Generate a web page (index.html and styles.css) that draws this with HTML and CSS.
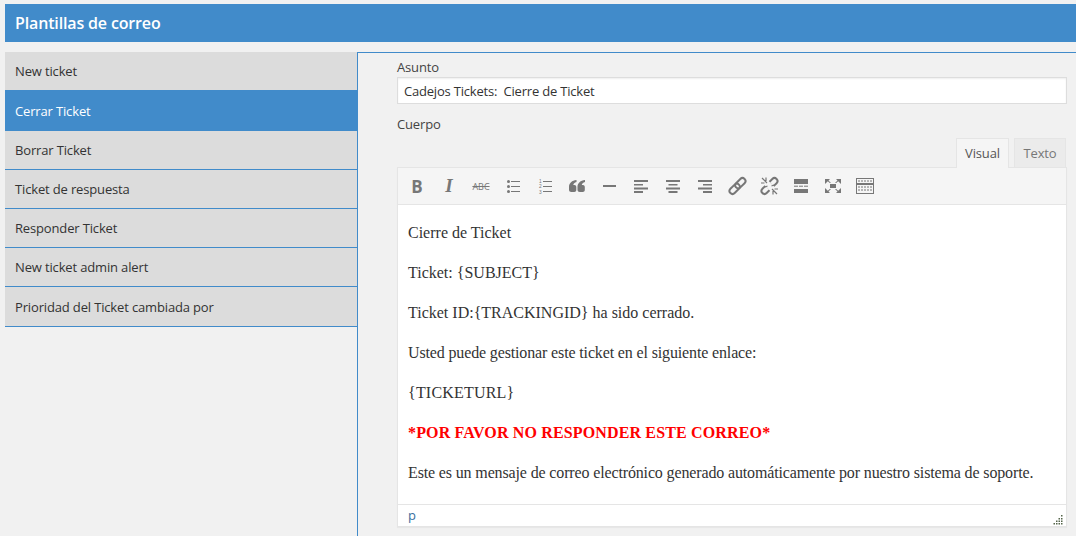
FILE: index.html
```html
<!DOCTYPE html>
<html lang="es">
<head>
  <meta charset="UTF-8">
  <title>Plantillas de correo</title>
  <link rel="stylesheet" href="styles.css">
</head>
<body>

<h1 class="title">Plantillas de correo</h1>

<div class="main">
  <ul class="menu">
    <li class="menu-first">New ticket</li>
    <li class="active">Cerrar Ticket</li>
    <li>Borrar Ticket</li>
    <li>Ticket de respuesta</li>
    <li>Responder Ticket</li>
    <li>New ticket admin alert</li>
    <li class="menu-last">Prioridad del Ticket cambiada por</li>
  </ul>

  <div class="panel">
    <label class="field-label">Asunto</label>
    <input class="subject" type="text" value="Cadejos Tickets:  Cierre de Ticket">
    <label class="field-label body-label">Cuerpo</label>

    <div class="tabs">
      <span class="tab tab-on">Visual</span>
      <span class="tab">Texto</span>
    </div>

    <div class="editor">
      <div class="toolbar">
        <span class="btn txt-b">B</span>
        <span class="btn txt-i">I</span>
        <span class="btn txt-abc">ABC</span>
        <span class="btn"><svg width="20" height="20" viewBox="0 0 20 20"><g fill="#777"><circle cx="5.500" cy="5.500" r="1.500"/><circle cx="5.500" cy="10.500" r="1.500"/><circle cx="5.500" cy="15.500" r="1.500"/><rect x="8" y="5" width="9" height="1"/><rect x="8" y="10" width="9" height="1"/><rect x="8" y="15" width="9" height="1"/></g></svg></span>
        <span class="btn"><svg width="20" height="20" viewBox="0 0 20 20"><g fill="#777"><rect x="8" y="5" width="9" height="1"/><rect x="8" y="10" width="9" height="1"/><rect x="8" y="15" width="9" height="1"/></g><g fill="#777" font-size="4.800" font-family="Liberation Sans"><text x="4" y="6.500">1</text><text x="4" y="12">2</text><text x="4" y="17.500">3</text></g></svg></span>
        <span class="btn"><svg width="20" height="20" viewBox="0 0 20 20"><path fill="#777" d="M9.500 4v2C7.500 6.500 6.500 7.600 6.300 9h1.200c1 0 1.800.8 1.800 2v3c0 1.200-.9 2-2 2H4.300C3 16 2 15 2 13.700v-2.900C2 7.200 5 4.300 9.500 4zM18 4v2c-2 .5-3 1.600-3.200 3H16c1 0 1.800.8 1.800 2v3c0 1.200-.9 2-2 2h-3c-1.300 0-2.300-1-2.300-2.300v-2.900C10.500 7.200 13.500 4.300 18 4z"/></svg></span>
        <span class="btn"><svg width="20" height="20" viewBox="0 0 20 20"><rect x="4" y="9" width="13" height="2" fill="#777"/></svg></span>
        <span class="btn"><svg width="20" height="20" viewBox="0 0 20 20"><g fill="#777"><rect x="3" y="4" width="14" height="2"/><rect x="3" y="8" width="9" height="1.500"/><rect x="3" y="11.500" width="14" height="2"/><rect x="3" y="15" width="9" height="2"/></g></svg></span>
        <span class="btn"><svg width="20" height="20" viewBox="0 0 20 20"><g fill="#777"><rect x="3" y="4" width="14" height="2"/><rect x="5.500" y="8" width="9" height="1.500"/><rect x="3" y="11.500" width="14" height="2"/><rect x="5.500" y="15" width="9" height="2"/></g></svg></span>
        <span class="btn"><svg width="20" height="20" viewBox="0 0 20 20"><g fill="#777"><rect x="3" y="4" width="14" height="2"/><rect x="8" y="8" width="9" height="1.500"/><rect x="3" y="11.500" width="14" height="2"/><rect x="8" y="15" width="9" height="2"/></g></svg></span>
        <span class="btn"><svg width="20" height="20" viewBox="0 0 20 20"><g fill="none" stroke="#777" stroke-width="2" transform="rotate(-45 10.500 10)"><rect x="0.500" y="7" width="12" height="6" rx="3"/><rect x="8.500" y="7" width="12" height="6" rx="3"/></g></svg></span>
        <span class="btn"><svg width="20" height="20" viewBox="0 0 20 20"><g fill="none" stroke="#777" stroke-width="2" transform="rotate(-45 10.500 10)"><rect x="0.500" y="7" width="12" height="6" rx="3"/><rect x="8.500" y="7" width="12" height="6" rx="3"/></g><path d="M5 4.500 16 15.500" stroke="#f5f5f5" stroke-width="6"/><g stroke="#777" stroke-width="1.200"><path d="M3 2l5 5M7 1.500V5M2 7h3.500M18 18l-5-5M14 18.500V15M19 13h-3.500M8.500 10l-2.500 1M12.500 10l2.500-1"/></g></svg></span>
        <span class="btn"><svg width="20" height="20" viewBox="0 0 20 20"><g fill="#777"><rect x="3" y="3" width="14" height="5"/><rect x="3" y="9.700" width="4" height="1"/><rect x="8" y="9.700" width="4" height="1"/><rect x="13" y="9.700" width="4" height="1"/><rect x="3" y="13" width="14" height="4"/></g></svg></span>
        <span class="btn"><svg width="20" height="20" viewBox="0 0 20 20"><g fill="#777"><rect x="7" y="8" width="6" height="4"/><path d="M2 3h5L5.500 4.500 8 7H6.800L4.800 5.200 2 8zM18 3v5l-2.800-2.800-2 1.800H12l2.500-2.500L13 3zM2 17v-5l2.800 2.800 2-1.800H8l-2.500 2.500L7 17zM18 17h-5l1.500-1.500L12 13h1.200l2 1.800L18 12z"/></g></svg></span>
        <span class="btn"><svg width="20" height="20" viewBox="0 0 20 20"><g fill="none" stroke="#777"><rect x="1.500" y="2.500" width="17" height="5"/><rect x="1.500" y="8.500" width="17" height="9"/></g><g stroke="#777" stroke-dasharray="2 1"><path d="M3 5h14M3 11h14M3 14h14"/></g></svg></span>
      </div>

      <div class="content">
        <p>Cierre de Ticket</p>
        <p>Ticket: {SUBJECT}</p>
        <p>Ticket ID:{TRACKINGID} ha sido cerrado.</p>
        <p class="tight">Usted puede gestionar este ticket en el siguiente enlace:</p>
        <p class="wide">{TICKETURL}</p>
        <p class="warn">*POR FAVOR NO RESPONDER ESTE CORREO*</p>
        <p class="tight">Este es un mensaje de correo electrónico generado automáticamente por nuestro sistema de soporte.</p>
      </div>

      <div class="status">
        <span class="path">p</span>
        <svg class="grip" width="10" height="10" viewBox="0 0 10 10"><path fill="#55654a" d="M8 0h1.500v1.500H8zM5.500 3H7v1.500H5.500zM8 3h1.500v1.500H8zM3 5.500h1.500V7H3zM5.500 5.500H7V7H5.500zM8 5.500h1.500V7H8zM.5 8H2v1.500H.5zM3 8h1.500v1.500H3zM5.500 8H7v1.500H5.500zM8 8h1.500v1.500H8z"/></svg>
      </div>
    </div>
  </div>
</div>

</body>
</html>
```

FILE: styles.css
```css
html, body {
  height: 100%;
}
body {
  margin: 0;
  padding-top: 4px;
  box-sizing: border-box;
  overflow: hidden;
  background-color: #f1f1f1;
  color: #333;
  font-family: 'Open Sans', sans-serif;
  font-size: 13px;
  letter-spacing: -0.15px;
}

.title {
  margin: 0 0 10px 5px;
  padding: 0 10px;
  height: 38px;
  line-height: 38px;
  background-color: #418bca;
  color: #fff;
  font-size: 16px;
  font-weight: 600;
}

.main {
  display: flex;
  margin-left: 5px;
}

.menu {
  width: 352px;
  margin: 0;
  padding: 0;
  list-style: none;
}
.menu li {
  height: 38px;
  line-height: 38px;
  padding: 0 10px;
  background-color: #dcdcdc;
  border-bottom: 1px solid #418bca;
}
.menu .menu-first {
  border-bottom: none;
}
.menu .active {
  height: 41px;
  line-height: 43px;
  background-color: #418bca;
  color: #fff;
  border-bottom: none;
}
.menu .menu-last {
  height: 39px;
  line-height: 40px;
}

.panel {
  flex: 1;
  height: 484px;
  padding: 5px 9px 0 39px;
  background-color: #f1f1f1;
  border-left: 1px solid #418bca;
  border-top: 1px solid #418bca;
}

.field-label {
  display: block;
  height: 19px;
  line-height: 18px;
  color: #444;
}
.body-label {
  margin-top: 10px;
  height: 20px;
  line-height: 20px;
}

.subject {
  display: block;
  box-sizing: border-box;
  width: 670px;
  height: 27px;
  margin: 0;
  padding: 0 6px;
  border: 1px solid #ddd;
  box-shadow: inset 0 1px 2px rgba(0, 0, 0, 0.07);
  background-color: #fff;
  color: #333;
  font-family: 'Open Sans', sans-serif;
  font-size: 13px;
  letter-spacing: -0.2px;
}

.tabs {
  display: flex;
  justify-content: flex-end;
  gap: 5px;
  width: 669px;
  margin-top: 4px;
  height: 29px;
}
.tab {
  box-sizing: border-box;
  height: 29px;
  width: 52px;
  line-height: 28px;
  text-align: center;
  background-color: #ebebeb;
  border: 1px solid #e5e5e5;
  border-bottom: none;
  color: #777;
}
.tab-on {
  width: 53px;
  height: 30px;
  background-color: #f5f5f5;
  color: #555;
  position: relative;
}

.editor {
  box-sizing: border-box;
  width: 670px;
  background-color: #fff;
  border: 1px solid #e5e5e5;
  box-shadow: 0 1px 1px rgba(0, 0, 0, 0.04);
}

.toolbar {
  display: flex;
  height: 36px;
  padding-left: 3px;
  align-items: center;
  background-color: #f5f5f5;
  border-bottom: 1px solid #e5e5e5;
}
.btn {
  display: flex;
  flex: none;
  width: 32px;
  height: 30px;
  align-items: center;
  justify-content: center;
  color: #777;
  letter-spacing: 0;
}
.txt-b {
  font-size: 17px;
  font-weight: 700;
}
.txt-i {
  font-family: 'Liberation Serif', serif;
  font-size: 19px;
  font-weight: 700;
  font-style: italic;
}
.txt-abc {
  font-size: 9px;
  text-decoration: line-through;
}

.content {
  display: flow-root;
  height: 299px;
  padding: 0 10px;
  font-family: 'Liberation Serif', serif;
  font-size: 16px;
  line-height: 24px;
  color: #333;
  letter-spacing: 0;
}
.content p {
  margin: 16px 0;
}
.content .tight {
  letter-spacing: -0.14px;
}
.content .wide {
  letter-spacing: 0.2px;
}
.content .warn {
  color: #f00;
  font-weight: 700;
  letter-spacing: 0.15px;
}

.status {
  display: flex;
  justify-content: space-between;
  align-items: center;
  box-sizing: border-box;
  height: 22px;
  padding: 0 3px 2px 10px;
  border-top: 1px solid #e5e5e5;
  color: #3a6f9e;
  font-size: 13px;
}
.grip {
  align-self: flex-end;
  margin-bottom: -1px;
}
```
